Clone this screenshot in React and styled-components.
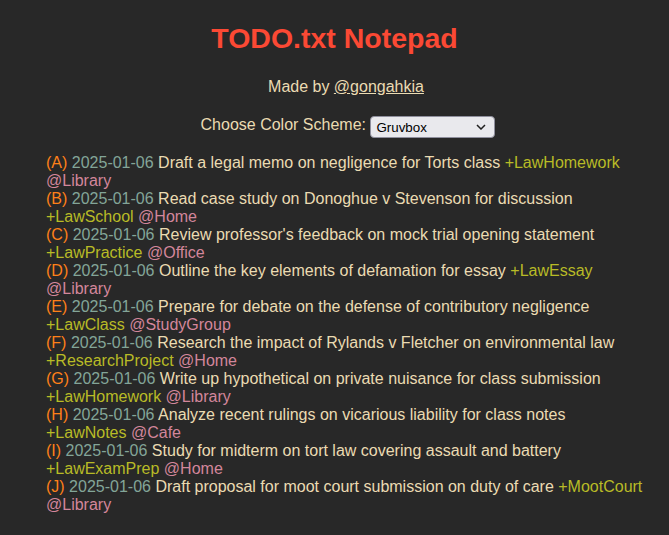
import styled, { createGlobalStyle } from "styled-components";

const GlobalStyle = createGlobalStyle`
    body{
        margin: 0;
        background-color: #282828;
        color: #ebdbb2;
        font-family: "Liberation Sans", Arial, sans-serif;
        font-size: 16px;
    }
`;

const tasks = [
    { pri: "A", text: "Draft a legal memo on negligence for Torts class", project: "LawHomework", context: "Library" },
    { pri: "B", text: "Read case study on Donoghue v Stevenson for discussion", project: "LawSchool", context: "Home" },
    { pri: "C", text: "Review professor's feedback on mock trial opening statement", project: "LawPractice", context: "Office" },
    { pri: "D", text: "Outline the key elements of defamation for essay", project: "LawEssay", context: "Library" },
    { pri: "E", text: "Prepare for debate on the defense of contributory negligence", project: "LawClass", context: "StudyGroup" },
    { pri: "F", text: "Research the impact of Rylands v Fletcher on environmental law", project: "ResearchProject", context: "Home" },
    { pri: "G", text: "Write up hypothetical on private nuisance for class submission", project: "LawHomework", context: "Library" },
    { pri: "H", text: "Analyze recent rulings on vicarious liability for class notes", project: "LawNotes", context: "Cafe" },
    { pri: "I", text: "Study for midterm on tort law covering assault and battery", project: "LawExamPrep", context: "Home" },
    { pri: "J", text: "Draft proposal for moot court submission on duty of care", project: "MootCourt", context: "Library" },
];

const App = () => {
    return (
        <Container>
            <GlobalStyle />
            <Title>TODO.txt Notepad</Title>
            <Credit>
                Made by <a href="#">@gongahkia</a>
            </Credit>
            <SchemePicker>
                Choose Color Scheme:{" "}
                <SelectWrap>
                    <select defaultValue="gruvbox">
                        <option value="gruvbox">Gruvbox</option>
                        <option value="solarized">Solarized</option>
                        <option value="dracula">Dracula</option>
                    </select>
                    <Chevron width="10" height="6" viewBox="0 0 10 6">
                        <path d="M1 1 L5 5 L9 1" fill="none" stroke="#202020" strokeWidth="1.5" />
                    </Chevron>
                </SelectWrap>
            </SchemePicker>
            <TaskList>
                {tasks.map((t) => (
                    <Task key={t.pri}>
                        <Token kind="priority">({t.pri})</Token>{" "}
                        <Token kind="date">2025-01-06</Token>{" "}
                        <Token kind="text">{t.text}</Token>{" "}
                        <Token kind="project">+{t.project}</Token>{" "}
                        <Token kind="context">@{t.context}</Token>
                    </Task>
                ))}
            </TaskList>
        </Container>
    );
};

const colors = {
    priority: "#fe8019",
    date: "#83a598",
    text: "#ebdbb2",
    project: "#b8bb26",
    context: "#d3869b",
};

const Container = styled.div`
    text-align: center;
`;

const Title = styled.h1`
    color: #fb4934;
    font-size: 28.5px;
    line-height: 33px;
    margin: 22px 0 23px;
`;

const Credit = styled.p`
    margin: 0 0 18px;
    padding-left: 23px;

    a{
        color: #ebdbb2;
    }
`;

const SchemePicker = styled.p`
    margin: 0 0 18px;
    padding-left: 27px;
    height: 22px;
    line-height: 22px;
`;

const SelectWrap = styled.span`
    position: relative;
    display: inline-block;
    vertical-align: top;
    margin-top: 2px;

    select{
        appearance: none;
        display: block;
        width: 125px;
        height: 22px;
        margin: 0;
        padding: 0 20px 0 5px;
        background-color: #e9e9ed;
        border: 1px solid #8f8f9d;
        border-radius: 4px;
        color: #000;
        font-size: 13.33px;
        font-family: Arial, "Liberation Sans", sans-serif;
        text-align: left;
    }
`;

const Chevron = styled.svg`
    position: absolute;
    right: 9px;
    top: 8px;
    pointer-events: none;
`;

const TaskList = styled.ul`
    list-style: none;
    text-align: left;
    margin: 0;
    padding: 0 23px 0 46px;
`;

const Task = styled.li`
    line-height: 18px;
`;

const Token = styled.span`
    color: ${(p) => colors[p.kind]};
`;

export default App;
